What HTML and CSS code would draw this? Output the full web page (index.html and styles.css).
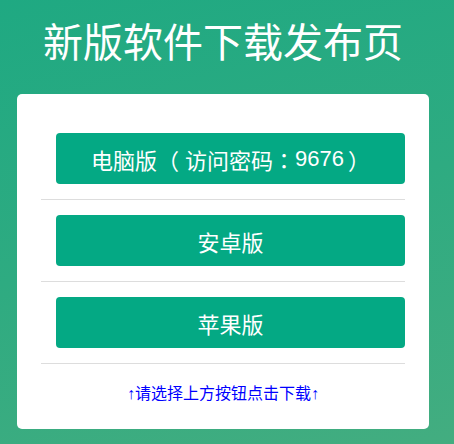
FILE: index.html
```html
<!DOCTYPE html>
<html lang="zh-CN">
<head>
<meta charset="utf-8">
<title>新版软件下载发布页</title>
<link rel="stylesheet" href="styles.css">
</head>
<body>
<div class="page">
  <h1 class="title">新版软件下载发布页</h1>
  <div class="card">
    <div class="item"><a class="btn" href="#">电脑版<span class="punc open">（</span>访问密码<span class="punc">：</span>9676<span class="punc close">）</span></a></div>
    <div class="item"><a class="btn" href="#">安卓版</a></div>
    <div class="item"><a class="btn" href="#">苹果版</a></div>
    <p class="tip">↑请选择上方按钮点击下载↑</p>
  </div>
</div>
</body>
</html>
```

FILE: styles.css
```css
html, body {
  margin: 0;
  padding: 0;
}
body {
  width: 454px;
  height: 444px;
  overflow: hidden;
  background: linear-gradient(165deg, #1fa982 0%, #2eab81 50%, #43ad80 100%);
  font-family: "Noto Sans CJK SC", "Noto Sans", sans-serif;
}
.page {
  width: 412px;
  margin-left: 17px;
  padding-top: 12px;
}
.title {
  margin: 0 0 26px 0;
  font-size: 40px;
  line-height: 56px;
  font-weight: normal;
  color: #fff;
  text-align: center;
  letter-spacing: 0;
}
.card {
  background: #fff;
  border-radius: 5px;
  padding: 24px 24px 24px 24px;
}
.item {
  padding: 15px 0 15px 15px;
  border-bottom: 1px solid #dddddd;
}
.btn {
  display: flex;
  align-items: center;
  justify-content: center;
  height: 51px;
  background: #04a984;
  border-radius: 4px;
  color: #fff;
  text-decoration: none;
  font-size: 22px;
  font-family: "Liberation Sans", "Noto Sans CJK SC", sans-serif;
}
.punc {
  font-family: "Noto Sans CJK KR", "Noto Sans CJK SC", sans-serif;
}
.open {
  margin-right: 6px;
}
.close {
  margin-left: 4px;
}
.tip {
  margin: 19px 0 0 0;
  font-size: 16px;
  line-height: 22px;
  color: #0000ff;
  text-align: center;
  font-family: "Liberation Sans", "Noto Sans CJK SC", sans-serif;
}
```
